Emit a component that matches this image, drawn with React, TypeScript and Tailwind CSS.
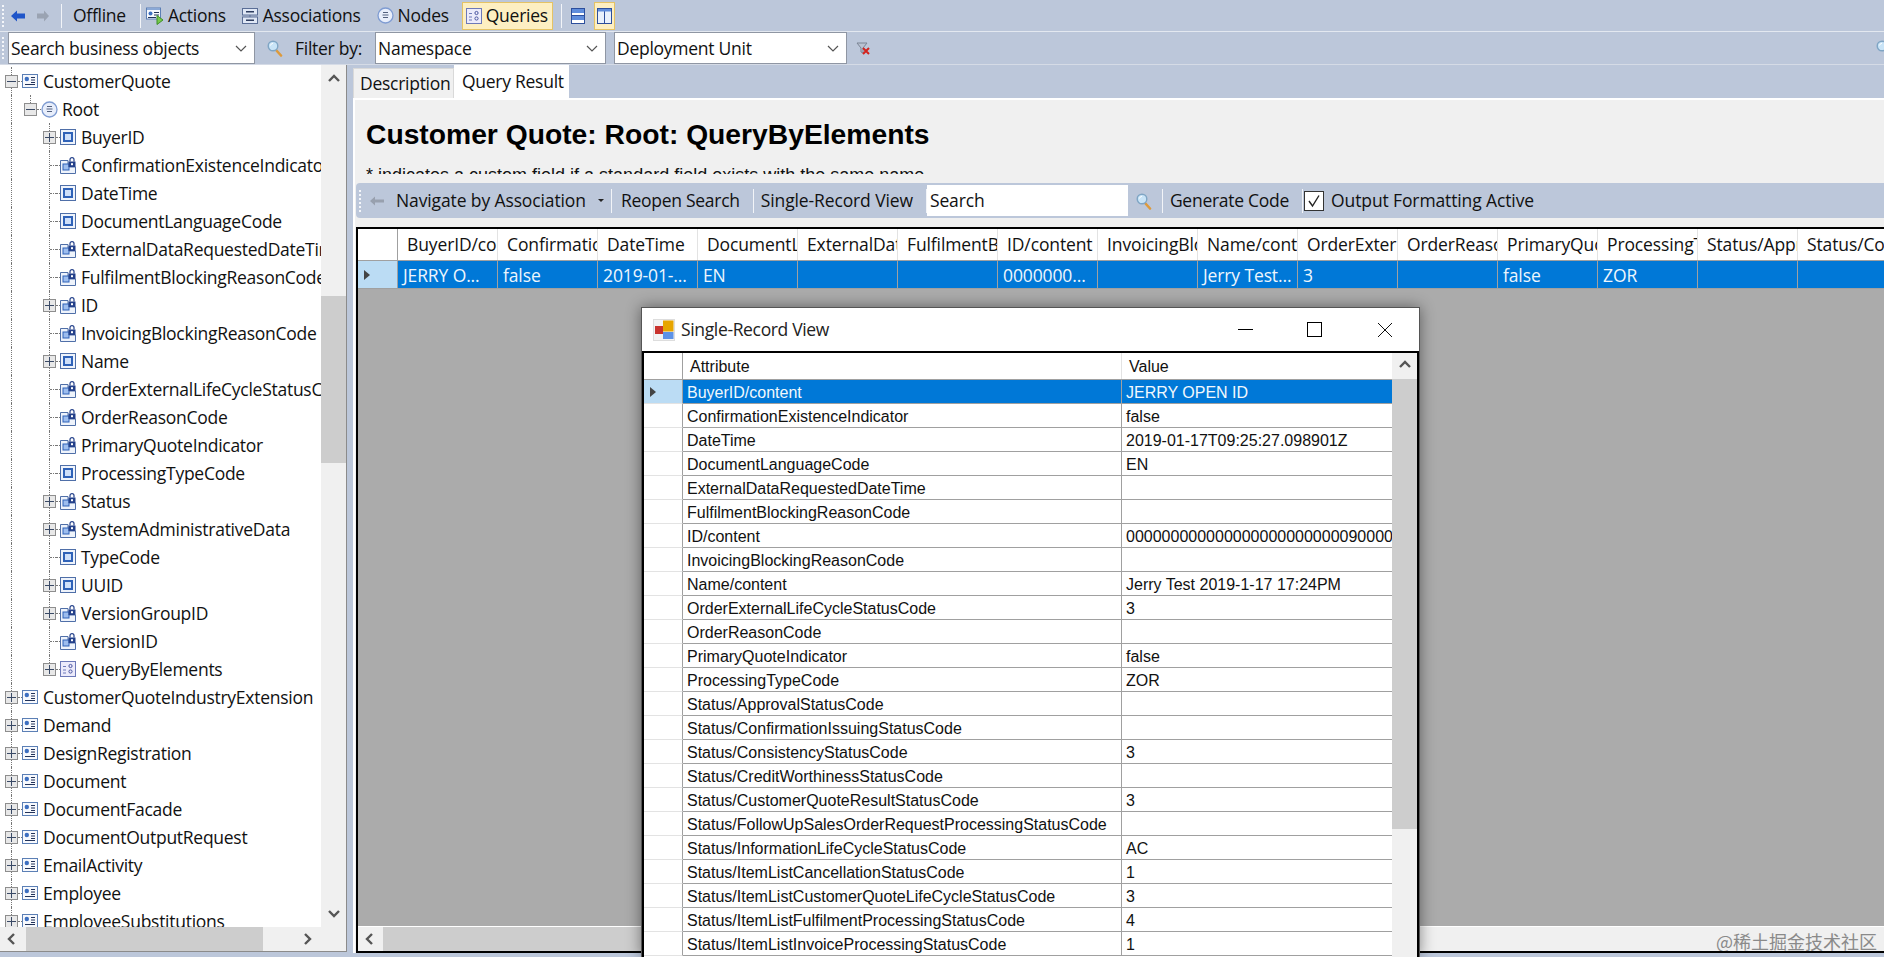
import { ReactNode } from "react";

const treeFont = "font-['Open_Sans',sans-serif] text-[17.5px] tracking-[-0.27px] text-[#111]";
const barFont = "font-['Open_Sans',sans-serif] text-[17.5px] tracking-[-0.12px] text-[#111]";

function IconBo() {
  return (
    <svg width="16" height="16" viewBox="0 0 16 16" className="shrink-0">
      <rect x="0.5" y="1.5" width="15" height="13" fill="#f7f9fd" stroke="#5b7fb5" />
      <circle cx="4.8" cy="6" r="2.2" fill="#3d6fc0" />
      <path d="M9 4.5h4M9 7h4M9 9.5h4M3 11.5h10" stroke="#22335a" />
    </svg>
  );
}

function IconActions() {
  return (
    <svg width="18" height="18" viewBox="0 0 18 18" className="shrink-0">
      <rect x="0.5" y="1" width="14" height="11" fill="#f7f9fd" stroke="#5b7fb5" />
      <path d="M1 1h13v2H1z" fill="#8aa8d6" />
      <circle cx="4.5" cy="6.5" r="2" fill="#3d6fc0" />
      <path d="M8 5.5h5M8 8h5M2 10.5h8" stroke="#22335a" />
      <path d="M11 8.5l6 4.5-6 4.5z" fill="#77c94b" stroke="#3f8f2a" />
    </svg>
  );
}

function IconAssoc() {
  return (
    <svg width="16" height="16" viewBox="0 0 16 16" className="shrink-0">
      <rect x="0.5" y="0.5" width="15" height="6.5" fill="#dfe7f5" stroke="#5a6e96" />
      <rect x="0.5" y="9" width="15" height="6.5" fill="#dfe7f5" stroke="#5a6e96" />
      <path d="M4 3.7h8M4 12.2h8" stroke="#2d3c5e" strokeWidth="1.5" />
      <path d="M8 7v2" stroke="#5a6e96" />
    </svg>
  );
}

function IconRoot() {
  return (
    <svg width="17" height="17" viewBox="0 0 17 17" className="shrink-0">
      <circle cx="8.5" cy="8.5" r="7.5" fill="#e8eefb" stroke="#7f9cd2" strokeWidth="1.3" />
      <path d="M6 5.5h5M5.5 8h6M6 10.5h5" stroke="#52607e" />
    </svg>
  );
}

function IconElement() {
  return (
    <svg width="16" height="16" viewBox="0 0 16 16" className="shrink-0">
      <rect x="0.5" y="0.5" width="15" height="15" fill="#eef3fb" stroke="#4f6fa8" />
      <rect x="4" y="4" width="8" height="8" fill="#cfe0fa" stroke="#2f62b8" strokeWidth="2" />
    </svg>
  );
}

function IconLocked() {
  return (
    <svg width="16" height="17" viewBox="0 0 16 17" className="shrink-0">
      <path d="M0.5 3.5H8V10h7.5v6.5H0.5z" fill="#eef3fb" stroke="#4f6fa8" />
      <rect x="3" y="7" width="6" height="6" fill="#9dbdee" stroke="#2f62b8" />
      <rect x="8.5" y="4.5" width="7" height="5.5" fill="#23408a" />
      <path d="M10 4.5V2.6a2 2 0 0 1 4 0v1.9" fill="none" stroke="#23408a" strokeWidth="1.2" />
      <rect x="11" y="6.2" width="2" height="2" fill="#fff" />
    </svg>
  );
}

function IconQuery({ size = 16 }: { size?: number }) {
  return (
    <svg width={size} height={size} viewBox="0 0 16 16" className="shrink-0">
      <rect x="0.5" y="0.5" width="15" height="15" fill="#ecebfb" stroke="#6d79b8" />
      <path d="M3 5.5h3M3 9h3M3 12h3" stroke="#6d79b8" />
      <circle cx="10.5" cy="5" r="1.6" fill="none" stroke="#4a55a0" />
      <circle cx="10.5" cy="10.5" r="1.6" fill="none" stroke="#4a55a0" />
    </svg>
  );
}

function IconSearch() {
  return (
    <svg width="16" height="18" viewBox="0 0 16 18" className="shrink-0">
      <path d="M9 11l5 5.5" stroke="#dd9a3c" strokeWidth="2.6" strokeLinecap="round" />
      <circle cx="6" cy="7" r="4.8" fill="#c9e4f7" stroke="#7fa5c4" strokeWidth="1.4" />
      <path d="M3.5 6.5a3 3 0 0 1 2.5-2.3" stroke="#fff" fill="none" />
    </svg>
  );
}

function Expander({ open }: { open: boolean }) {
  return (
    <span className="relative block w-[13px] h-[13px] shrink-0 border border-[#8e8e8e] bg-[#e8e8e8]">
      <span className="absolute left-[1px] right-[1px] top-[5px] h-px bg-[#3a4a66]" />
      {!open && <span className="absolute top-[1px] bottom-[1px] left-[5px] w-px bg-[#3a4a66]" />}
    </span>
  );
}

type Node = { label: string; depth: number; exp?: "open" | "closed"; icon: "bo" | "root" | "el" | "lock" | "query"; };

const tree: Node[] = [
  { label: "CustomerQuote", depth: 0, exp: "open", icon: "bo" },
  { label: "Root", depth: 1, exp: "open", icon: "root" },
  { label: "BuyerID", depth: 2, exp: "closed", icon: "el" },
  { label: "ConfirmationExistenceIndicator", depth: 2, icon: "lock" },
  { label: "DateTime", depth: 2, icon: "el" },
  { label: "DocumentLanguageCode", depth: 2, icon: "el" },
  { label: "ExternalDataRequestedDateTime", depth: 2, icon: "lock" },
  { label: "FulfilmentBlockingReasonCode", depth: 2, icon: "lock" },
  { label: "ID", depth: 2, exp: "closed", icon: "lock" },
  { label: "InvoicingBlockingReasonCode", depth: 2, icon: "lock" },
  { label: "Name", depth: 2, exp: "closed", icon: "el" },
  { label: "OrderExternalLifeCycleStatusCode", depth: 2, icon: "lock" },
  { label: "OrderReasonCode", depth: 2, icon: "lock" },
  { label: "PrimaryQuoteIndicator", depth: 2, icon: "lock" },
  { label: "ProcessingTypeCode", depth: 2, icon: "el" },
  { label: "Status", depth: 2, exp: "closed", icon: "lock" },
  { label: "SystemAdministrativeData", depth: 2, exp: "closed", icon: "lock" },
  { label: "TypeCode", depth: 2, icon: "el" },
  { label: "UUID", depth: 2, exp: "closed", icon: "el" },
  { label: "VersionGroupID", depth: 2, exp: "closed", icon: "lock" },
  { label: "VersionID", depth: 2, icon: "lock" },
  { label: "QueryByElements", depth: 2, exp: "closed", icon: "query" },
  { label: "CustomerQuoteIndustryExtension", depth: 0, exp: "closed", icon: "bo" },
  { label: "Demand", depth: 0, exp: "closed", icon: "bo" },
  { label: "DesignRegistration", depth: 0, exp: "closed", icon: "bo" },
  { label: "Document", depth: 0, exp: "closed", icon: "bo" },
  { label: "DocumentFacade", depth: 0, exp: "closed", icon: "bo" },
  { label: "DocumentOutputRequest", depth: 0, exp: "closed", icon: "bo" },
  { label: "EmailActivity", depth: 0, exp: "closed", icon: "bo" },
  { label: "Employee", depth: 0, exp: "closed", icon: "bo" },
  { label: "EmployeeSubstitutions", depth: 0, exp: "closed", icon: "bo" },
];

const icons: Record<Node["icon"], ReactNode> = {
  bo: <IconBo />,
  root: <IconRoot />,
  el: <IconElement />,
  lock: <IconLocked />,
  query: <IconQuery />,
};

function TreeRow({ node, index }: { node: Node; index: number }) {
  const pad = node.depth === 0 ? "pl-[5px]" : node.depth === 1 ? "pl-[24px]" : "pl-[43px]";
  return (
    <div className={`relative flex items-center h-[28px] ${pad}`}>
      {/* dotted guides */}
      <span className="absolute left-[11px] top-0 bottom-0 border-l border-dotted border-[#777]" />
      {node.depth === 1 && <span className="absolute left-[30px] top-0 h-[8px] border-l border-dotted border-[#777]" />}
      {node.depth === 2 && (
        <span className={`absolute left-[49px] top-0 border-l border-dotted border-[#777] ${index === 21 ? "h-[14px]" : "bottom-0"}`} />
      )}
      <span className="w-[13px] shrink-0">{node.exp ? <Expander open={node.exp === "open"} /> : (
        <span className="block ml-[7px] w-[6px] border-t border-dotted border-[#777]" />
      )}</span>
      <span className="w-[4px] shrink-0 border-t border-dotted border-[#777]" />
      <span className="w-[16px] flex justify-center shrink-0">{icons[node.icon]}</span>
      <span className={`ml-[5px] whitespace-nowrap ${treeFont}`}>{node.label}</span>
    </div>
  );
}

function Grip() {
  return <span className="w-[3px] h-[22px] shrink-0 border-l-2 border-dotted border-[#f4f6fa]" />;
}

function Sep({ className = "" }: { className?: string }) {
  return <span className={`w-px h-[24px] shrink-0 bg-[#f2f4f8] ${className}`} />;
}

function Chevron({ dir, className = "" }: { dir: "up" | "down" | "left" | "right"; className?: string }) {
  const d = { up: "M2 8l5-5 5 5", down: "M2 4l5 5 5-5", left: "M9 2L4 7l5 5", right: "M5 2l5 5-5 5" }[dir];
  return (
    <svg width="14" height="14" viewBox="0 0 14 14" className={`shrink-0 ${className}`}>
      <path d={d} fill="none" stroke="#555" strokeWidth="2.4" />
    </svg>
  );
}

function Combo({ text, width }: { text: string; width: string }) {
  return (
    <div className={`flex items-center justify-between h-[32px] bg-white border border-[#8f96a3] pl-[2px] pr-[6px] ${width}`}>
      <span>{text}</span>
      <svg width="14" height="14" viewBox="0 0 14 14"><path d="M2 5l5 5 5-5" fill="none" stroke="#555" strokeWidth="1.2" /></svg>
    </div>
  );
}

const columns: [string, string][] = [
  ["BuyerID/content", "JERRY O..."],
  ["ConfirmationExistenceIndicator", "false"],
  ["DateTime", "2019-01-..."],
  ["DocumentLanguageCode", "EN"],
  ["ExternalDataRequestedDateTime", ""],
  ["FulfilmentBlockingReasonCode", ""],
  ["ID/content", "0000000..."],
  ["InvoicingBlockingReasonCode", ""],
  ["Name/content", "Jerry Test..."],
  ["OrderExternalLifeCycleStatusCode", "3"],
  ["OrderReasonCode", ""],
  ["PrimaryQuoteIndicator", "false"],
  ["ProcessingTypeCode", "ZOR"],
  ["Status/ApprovalStatusCode", ""],
  ["Status/ConfirmationIssuingStatusCode", ""],
];

const records: [string, string][] = [
  ["BuyerID/content", "JERRY OPEN ID"],
  ["ConfirmationExistenceIndicator", "false"],
  ["DateTime", "2019-01-17T09:25:27.098901Z"],
  ["DocumentLanguageCode", "EN"],
  ["ExternalDataRequestedDateTime", ""],
  ["FulfilmentBlockingReasonCode", ""],
  ["ID/content", "0000000000000000000000000900001"],
  ["InvoicingBlockingReasonCode", ""],
  ["Name/content", "Jerry Test 2019-1-17 17:24PM"],
  ["OrderExternalLifeCycleStatusCode", "3"],
  ["OrderReasonCode", ""],
  ["PrimaryQuoteIndicator", "false"],
  ["ProcessingTypeCode", "ZOR"],
  ["Status/ApprovalStatusCode", ""],
  ["Status/ConfirmationIssuingStatusCode", ""],
  ["Status/ConsistencyStatusCode", "3"],
  ["Status/CreditWorthinessStatusCode", ""],
  ["Status/CustomerQuoteResultStatusCode", "3"],
  ["Status/FollowUpSalesOrderRequestProcessingStatusCode", ""],
  ["Status/InformationLifeCycleStatusCode", "AC"],
  ["Status/ItemListCancellationStatusCode", "1"],
  ["Status/ItemListCustomerQuoteLifeCycleStatusCode", "3"],
  ["Status/ItemListFulfilmentProcessingStatusCode", "4"],
  ["Status/ItemListInvoiceProcessingStatusCode", "1"],
];

function SingleRecordView() {
  const f = "font-['Liberation_Sans',sans-serif] text-[16px] text-[#111]";
  return (
    <div className="absolute left-[641px] top-[307px] w-[779px] h-[650px] bg-white border border-[#555] border-b-0 shadow-[0_0_14px_rgba(0,0,0,0.45)] flex flex-col overflow-hidden">
      <div className="h-[45px] shrink-0 flex items-center pl-[11px] border-b-2 border-black">
        <svg width="22" height="22" viewBox="0 0 22 22" className="shrink-0">
          <rect x="0.5" y="0.5" width="21" height="21" fill="#f3f3f3" stroke="#ddd" />
          <rect x="10" y="1.5" width="10.5" height="11" fill="#e7a500" />
          <rect x="2" y="7" width="8" height="8" fill="#c9332e" />
          <rect x="10" y="13" width="10.5" height="7" fill="#5d92e8" />
        </svg>
        <span className="ml-[6px] font-['Open_Sans',sans-serif] text-[17.5px] tracking-[-0.35px] text-[#222]">Single-Record View</span>
        <div className="ml-auto flex items-center pr-[26px]">
          <span className="w-[15px] h-px bg-black" />
          <span className="ml-[54px] w-[15px] h-[15px] border border-black" />
          <svg width="16" height="16" viewBox="0 0 16 16" className="ml-[55px]"><path d="M1 1l14 14M15 1L1 15" stroke="#111" /></svg>
        </div>
      </div>
      <div className="flex flex-1 min-h-0 border-l-2 border-r-2 border-black">
        <div className="flex-1 min-w-0">
          <div className="flex h-[27px] border-b border-[#a0a0a0]">
            <div className="w-[39px] border-r border-[#a0a0a0]" />
            <div className={`w-[439px] pl-[7px] leading-[28px] border-r border-[#e3e3e3] ${f}`}>Attribute</div>
            <div className={`flex-1 pl-[7px] leading-[28px] ${f}`}>Value</div>
          </div>
          {records.map(([k, v], i) => (
            <div key={k} className="flex h-[24px]">
              <div className={`w-[39px] shrink-0 flex items-center pl-[6px] border-r border-b border-r-[#a0a0a0] border-b-[#e3e3e3] ${i === 0 ? "bg-[#bbdcf4]" : ""}`}>
                {i === 0 && <span className="border-y-[5px] border-l-[6px] border-y-transparent border-l-[#444]" />}
              </div>
              <div className={`w-[439px] shrink-0 pl-[4px] leading-[25px] border-r border-b border-[#a0a0a0] overflow-hidden whitespace-nowrap ${f} ${i === 0 ? "bg-[#0078d7] !text-[#f2f8fd]" : ""}`}>{k}</div>
              <div className={`flex-1 min-w-0 pl-[4px] leading-[25px] border-b border-[#a0a0a0] overflow-hidden whitespace-nowrap ${f} ${i === 0 ? "bg-[#0078d7] !text-[#f2f8fd]" : ""}`}>{v}</div>
            </div>
          ))}
        </div>
        <div className="w-[25px] shrink-0 bg-[#f0f0f0] flex flex-col">
          <div className="h-[26px] flex items-center justify-center"><Chevron dir="up" /></div>
          <div className="h-[450px] bg-[#cdcdcd]" />
        </div>
      </div>
    </div>
  );
}

export default function App() {
  return (
    <div className="relative w-[1884px] h-[957px] overflow-hidden bg-[#bcc7da] flex flex-col">
      {/* main toolbar */}
      <div className={`h-[31px] shrink-0 flex items-center pl-[2px] ${treeFont}`}>
        <Grip />
        <svg width="14" height="12" viewBox="0 0 14 12" className="ml-[6px] shrink-0"><path d="M0 6l6-5.5v3h8v5H6v3z" fill="#1f55c9" /></svg>
        <svg width="12" height="12" viewBox="0 0 12 12" className="ml-[12px] shrink-0"><path d="M12 6L7 .5v3H0v5h7v3z" fill="#9aa3b2" /></svg>
        <Sep className="ml-[12px]" />
        <span className="ml-[11px]">Offline</span>
        <Sep className="ml-[14px]" />
        <span className="ml-[5px]"><IconActions /></span>
        <span className="ml-[4px]">Actions</span>
        <span className="ml-[16px]"><IconAssoc /></span>
        <span className="ml-[5px]">Associations</span>
        <span className="ml-[16px]"><IconRoot /></span>
        <span className="ml-[4px]">Nodes</span>
        <div className="ml-[13px] h-[28px] w-[91px] flex items-center pl-[3px] bg-[#fdefc2] border border-[#e5c365]">
          <IconQuery />
          <span className="ml-[4px]">Queries</span>
        </div>
        <Sep className="ml-[8px]" />
        <svg width="14" height="16" viewBox="0 0 14 16" className="ml-[9px] shrink-0">
          <rect x="0.5" y="0.5" width="13" height="15" fill="#fff" stroke="#2d4f9c" />
          <path d="M1 1h12v4H1z" fill="#5f8ddc" /><path d="M1 8h12v4H1z" fill="#5f8ddc" /><path d="M1 7.5h12" stroke="#2d4f9c" />
        </svg>
        <div className="ml-[9px] w-[21px] h-[28px] flex items-center justify-center bg-[#fdefc2] border border-[#e5c365]">
          <svg width="15" height="16" viewBox="0 0 15 16"><rect x="0.5" y="0.5" width="14" height="15" fill="#e9f1fc" stroke="#2d4f9c" /><path d="M7.5 1v14" stroke="#2d4f9c" /><path d="M1 1h13v2.5H1z" fill="#5f8ddc" /></svg>
        </div>
      </div>
      <div className="h-px shrink-0 bg-[#e3e8f0]" />

      {/* search toolbar */}
      <div className={`h-[33px] shrink-0 flex items-center pl-[2px] border-b border-[#d5dbe6] ${treeFont}`}>
        <Grip />
        <Combo text="Search business objects" width="w-[247px] ml-[3px]" />
        <span className="ml-[12px]"><IconSearch /></span>
        <span className="ml-[12px]">Filter by:</span>
        <Combo text="Namespace" width="w-[231px] ml-[13px]" />
        <Combo text="Deployment Unit" width="w-[233px] ml-[8px]" />
        <svg width="16" height="16" viewBox="0 0 16 16" className="ml-[8px] shrink-0">
          <path d="M2 3h10l-4 5v5l-2-1V8z" fill="#b9c2d2" stroke="#7b8494" />
          <path d="M8 8l6 6M14 8l-6 6" stroke="#d3231d" strokeWidth="2" />
        </svg>
        <span className="ml-auto -mr-[8px]"><IconSearch /></span>
      </div>

      <div className="flex flex-1 min-h-0">
        {/* left tree */}
        <div className="w-[347px] h-[887px] shrink-0 bg-white border-r border-[#8b8b8b] flex flex-col">
          <div className="flex flex-1 min-h-0">
            <div className="w-[321px] shrink-0 overflow-hidden pt-[2px]">
              {tree.map((n, i) => <TreeRow key={n.label} node={n} index={i} />)}
            </div>
            <div className="flex-1 bg-[#f0f0f0] flex flex-col">
              <div className="h-[29px] flex items-center justify-center"><Chevron dir="up" /></div>
              <div className="mt-[202px] h-[167px] bg-[#cdcdcd]" />
              <div className="mt-auto h-[26px] flex items-center justify-center"><Chevron dir="down" /></div>
            </div>
          </div>
          <div className="h-[25px] shrink-0 bg-[#f0f0f0] flex items-center border-b border-[#8b8b8b]">
            <Chevron dir="left" className="ml-[5px]" />
            <div className="ml-[7px] w-[237px] h-full bg-[#cdcdcd]" />
            <Chevron dir="right" className="ml-[37px]" />
          </div>
        </div>

        {/* right side */}
        <div className="flex-1 min-w-0 pl-[6px] flex flex-col">
          <div className={`h-[33px] shrink-0 flex items-end ${treeFont}`}>
            <div className="w-[101px] h-[30px] bg-[#f0f0f0] border border-[#d9d9d9] border-b-0 pl-[6px] leading-[28px]">Description</div>
            <div className="w-[115px] h-[33px] bg-white pl-[8px] leading-[32px]">Query Result</div>
          </div>
          <div className="flex-1 min-h-0 bg-[#f0f0f0] border-t-2 border-l-2 border-white flex flex-col mb-[4px]">
            <div className="h-[74px] shrink-0 overflow-hidden pl-[11px] font-['Liberation_Sans',sans-serif]">
              <h1 className="mt-[18px] text-[28.25px] leading-[32px] font-bold text-black whitespace-nowrap">Customer Quote: Root: QueryByElements</h1>
              <p className="mt-[15px] text-[18px] leading-[20px] text-[#111] whitespace-nowrap">* indicates a custom field if a standard field exists with the same name</p>
            </div>
            <div className={`h-[35px] shrink-0 mt-[9px] ml-[1px] bg-[#bcc7da] rounded-l-[4px] flex items-center pl-[3px] ${barFont}`}>
              <Grip />
              <svg width="14" height="10" viewBox="0 0 14 10" className="ml-[8px] shrink-0"><path d="M0 5l5-4.5v3h9v3H5v3z" fill="#98a0ae" /></svg>
              <span className="ml-[12px]">Navigate by Association</span>
              <span className="ml-[12px] border-x-[3px] border-t-[3px] border-x-transparent border-t-[#222]" />
              <Sep className="ml-[7px]" />
              <span className="ml-[9px] tracking-[-0.27px]">Reopen Search</span>
              <Sep className="ml-[13px]" />
              <span className="ml-[7px]">Single-Record View</span>
              <Sep className="ml-[13px]" />
              <div className="w-[201px] h-[31px] bg-white pl-[3px] leading-[31px]">Search</div>
              <span className="ml-[8px]"><IconSearch /></span>
              <Sep className="ml-[10px]" />
              <span className="ml-[7px] tracking-[-0.27px]">Generate Code</span>
              <Sep className="ml-[13px]" />
              <span className="ml-[1px] w-[20px] h-[20px] bg-white border border-[#333] flex items-center justify-center">
                <svg width="14" height="14" viewBox="0 0 14 14"><path d="M2 7l3.5 5L12 1.5" fill="none" stroke="#222" strokeWidth="1.4" /></svg>
              </span>
              <span className="ml-[7px]">Output Formatting Active</span>
            </div>

            {/* result grid */}
            <div className="flex-1 min-h-0 mt-[9px] ml-[1px] border-2 border-black border-r-0 flex flex-col overflow-hidden">
              <div className={`h-[32px] shrink-0 flex bg-white border-b border-[#a0a0a0] ${barFont}`}>
                <div className="w-[40px] shrink-0 border-r border-[#a0a0a0]" />
                {columns.map(([h]) => (
                  <div key={h} className="w-[100px] shrink-0 pl-[9px] pr-[3px] border-r border-[#e3e3e3] overflow-hidden whitespace-nowrap leading-[31px]">{h}</div>
                ))}
              </div>
              <div className={`h-[28px] shrink-0 flex border-b border-[#a0a0a0] ${barFont}`}>
                <div className="w-[40px] shrink-0 bg-[#bbdcf4] flex items-center pl-[6px] border-r border-[#a0a0a0]">
                  <span className="border-y-[5px] border-l-[6px] border-y-transparent border-l-[#444]" />
                </div>
                <div className="flex flex-1 bg-[#0078d7]">
                  {columns.map(([h, v]) => (
                    <div key={h} className="w-[100px] shrink-0 pl-[5px] border-r border-[#a0a0a0] overflow-hidden whitespace-nowrap leading-[28px] !text-[#eef6fd]">{v}</div>
                  ))}
                </div>
              </div>
              <div className="flex-1 min-h-0 bg-[#ababab]" />
              <div className="h-[25px] shrink-0 bg-[#f0f0f0] border-t border-white flex items-center relative">
                <Chevron dir="left" className="ml-[5px]" />
                <div className="ml-[6px] w-[260px] h-full bg-[#cdcdcd]" />
                <span className="absolute right-[7px] top-[2px] font-['Noto_Sans_CJK_SC',sans-serif] text-[18px] leading-[24px] text-[#8a8a8a] whitespace-nowrap">@稀土掘金技术社区</span>
              </div>
            </div>
          </div>
        </div>
      </div>
      <SingleRecordView />
    </div>
  );
}
